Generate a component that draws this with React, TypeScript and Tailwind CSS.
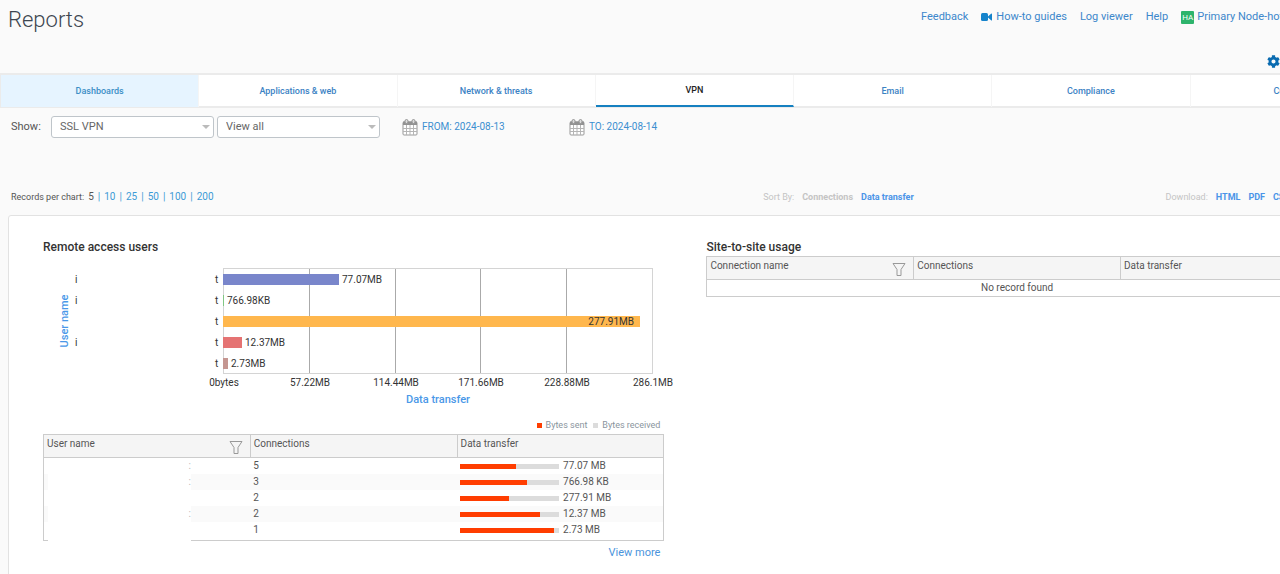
import { FaCog } from "react-icons/fa";

const TABS = ["Dashboards", "Applications & web", "Network & threats", "VPN", "Email", "Compliance", "Custom"];

const PAGE_SIZES = [10, 25, 50, 100, 200];

const BARS = [
  { width: 116, color: "#7986cb", label: "77.07MB", user: "i" },
  { width: 1, color: "#81c784", label: "766.98KB", user: "i" },
  { width: 417, color: "#ffb74d", label: "277.91MB", user: "", inside: true },
  { width: 19, color: "#e57373", label: "12.37MB", user: "i" },
  { width: 5, color: "#c59691", label: "2.73MB", user: "" },
];

const TICKS = ["0bytes", "57.22MB", "114.44MB", "171.66MB", "228.88MB", "286.1MB"];

const ROWS = [
  { connections: 5, sent: 56, total: "77.07 MB", mark: ":" },
  { connections: 3, sent: 68, total: "766.98 KB", mark: ":" },
  { connections: 2, sent: 49, total: "277.91 MB", mark: "" },
  { connections: 2, sent: 81, total: "12.37 MB", mark: ":" },
  { connections: 1, sent: 95, total: "2.73 MB", mark: "" },
];

function CalendarIcon() {
  return (
    <svg width="16" height="17" viewBox="0 0 16 17" className="shrink-0">
      <rect x="1" y="3" width="14" height="13" rx="1" fill="#fff" stroke="#999" />
      <path d="M1 2.5h14V6H1z" fill="#929292" />
      <path d="M4.5 6v10M8 6v10M11.5 6v10M1 9.5h14M1 12.5h14" stroke="#b5b5b5" />
      <rect x="3" y="0.5" width="3" height="4" rx="1.5" fill="#ddd" stroke="#929292" />
      <rect x="10" y="0.5" width="3" height="4" rx="1.5" fill="#ddd" stroke="#929292" />
    </svg>
  );
}

function VideoIcon() {
  return (
    <svg width="11" height="8" viewBox="0 0 11 8" fill="#1583cb">
      <rect width="7" height="8" rx="1.5" />
      <path d="M6.5 4L10 0.7Q11 0 11 1v6Q11 8 10 7.3z" />
    </svg>
  );
}

function FilterIcon() {
  return (
    <svg width="14" height="13" viewBox="0 0 14 13" fill="none" stroke="#999">
      <path d="M1 0.5h12L9 6.5v6H5v-6z" />
    </svg>
  );
}

function Select({ label, options }: { label: string; options: string[] }) {
  return (
    <div className="relative w-[163px]">
      <select
        aria-label={label}
        className="block h-[22px] w-full appearance-none rounded-[3px] border border-[#bfc5ca] bg-white pl-2 text-[11px] text-[#666]"
      >
        {options.map((o) => (
          <option key={o}>{o}</option>
        ))}
      </select>
      <svg width="8" height="4" className="pointer-events-none absolute right-1 top-[9px]">
        <path d="M0 0h8L4 4z" fill="#bbb" />
      </svg>
    </div>
  );
}

function TableHead({ first }: { first: string }) {
  const cell = "h-[23px] border border-[#ccc] px-[3px] pb-1 text-left font-normal";
  return (
    <thead className="bg-[#f5f5f5]">
      <tr>
        <th className={cell}>
          <div className="flex h-4 justify-between">
            {first}
            <button type="button" aria-label={"Filter by " + first} className="mr-1 mt-[5px]">
              <FilterIcon />
            </button>
          </div>
        </th>
        <th className={cell}>Connections</th>
        <th className={cell}>Data transfer</th>
      </tr>
    </thead>
  );
}

function UsageChart() {
  return (
    <svg viewBox="0 0 630 150" className="block w-[630px] text-[10px]" fill="#333" role="img" aria-label="Data transfer by user name">
      {/* plot area and grid */}
      <rect x="180.5" y="10.5" width="429" height="105" fill="none" stroke="#d4d4d4" />
      {[266.5, 352.5, 437.5, 523.5].map((x) => (
        <path key={x} d={`M${x} 11V115`} stroke="#aaa" />
      ))}

      {BARS.map((b, i) => (
        <g key={b.label} transform={`translate(0 ${i * 21})`}>
          <text x="32" y="25">{b.user}</text>
          <text x="172" y="25">t</text>
          <rect x="180" y="16" width={b.width} height="11" fill={b.color} />
          <text x={b.inside ? 591 : 183 + b.width} y="25" textAnchor={b.inside ? "end" : "start"}>
            {b.label}
          </text>
        </g>
      ))}

      {TICKS.map((t, i) => (
        <text key={t} x={181 + i * 86 - (i > 2 ? 1 : 0)} y="128" textAnchor="middle">{t}</text>
      ))}

      <g fill="#4a98e8" className="text-[11px] font-medium" textAnchor="middle">
        <text x="395" y="145">Data transfer</text>
        <text transform="translate(25 63) rotate(-90)">User name</text>
      </g>
    </svg>
  );
}

export default function App() {
  return (
    <div className="h-screen overflow-hidden bg-[#fafafa] font-['Roboto','Liberation_Sans',sans-serif] text-[11px] leading-4 text-[#555]">
      <header className="flex h-[73px] justify-between pl-2">
        <h1 className="pt-1 text-[22px] font-light leading-8 text-[#3d4650]">Reports</h1>
        <div className="flex w-[359px] flex-col justify-between overflow-hidden whitespace-nowrap pt-[9px] pb-[5px]">
          <nav className="flex gap-[13px] text-[#3c87cb]">
            <a href="#feedback">Feedback</a>
            <a href="#guides" className="flex items-center gap-1">
              <VideoIcon />
              How-to guides
            </a>
            <a href="#logs">Log viewer</a>
            <a href="#help">Help</a>
            <a href="#node" className="flex items-center gap-[3px]">
              <span className="w-[13px] rounded-[1px] bg-[#2eb46c] text-center text-[8px] leading-[13px] text-white">HA</span>
              Primary Node-hot
            </a>
          </nav>
          <button type="button" aria-label="Settings" className="self-end text-[#0a6bb0]">
            <FaCog className="size-[13px]" />
          </button>
        </div>
      </header>

      <div className="w-[108.5%]">
        <nav className="flex border-y-2 border-l border-[#ebebeb] bg-white text-[9px] font-medium">
          {TABS.map((tab) => (
            <a
              key={tab}
              href="#tab"
              className={
                "-mb-px flex h-8 flex-1 items-center justify-center border-r border-[#f5f5f5] " +
                (tab === "Dashboards"
                  ? "bg-[#e6f4ff] text-[#3d8fc6]"
                  : tab === "VPN"
                    ? "border-b-2 border-b-[#1580c0] text-[#222]"
                    : "text-[#3c82c4]")
              }
            >
              {tab}
            </a>
          ))}
        </nav>

        <div className="flex items-center pl-[11px] pt-2">
          <span className="w-10">Show:</span>
          <div className="flex gap-[3px]">
            <Select label="Report" options={["SSL VPN", "VPN"]} />
            <Select label="View" options={["View all"]} />
          </div>
          <button type="button" className="ml-[22px] flex w-[167px] items-center gap-1 text-[10px] text-[#3c8fd0]">
            <CalendarIcon />
            FROM: 2024-08-13
          </button>
          <button type="button" className="flex items-center gap-1 text-[10px] text-[#3c8fd0]">
            <CalendarIcon />
            TO: 2024-08-14
          </button>
        </div>

        <div className="grid grid-cols-[54.6%_29.2%_1fr] pl-[11px] pt-[51px] pb-[10px] text-[9px]">
          <div className="flex gap-1">
            Records per chart:
            <span className="text-[10px]">5</span>
            {PAGE_SIZES.map((n) => (
              <span key={n} className="flex gap-1 text-[10px] text-[#3c9bd6]">
                | <a href="#size">{n}</a>
              </span>
            ))}
          </div>
          <div className="flex gap-2 text-[#c4c4c4]">
            Sort By:
            <button type="button" className="font-bold">Connections</button>
            <button type="button" className="font-bold text-[#4a94e8]">Data transfer</button>
          </div>
          <div className="flex gap-2 text-[#c4c4c4]">
            Download:
            <a href="#html" className="font-bold text-[#4a94e8]">HTML</a>
            <a href="#pdf" className="font-bold text-[#4a94e8]">PDF</a>
            <a href="#csv" className="font-bold text-[#4a94e8]">CSV</a>
          </div>
        </div>

        <main className="ml-2 mr-[26px] grid grid-cols-2 gap-[42px] rounded-[3px] border border-[#e2e2e2] bg-white px-[34px] pt-[23px] pb-10 text-[10px]">
          <section className="min-w-0">
            <h2 className="text-[12px] font-medium text-[#333]">Remote access users</h2>
            <div className="pt-[3px]">
              <UsageChart />
            </div>
            <div className="flex items-center justify-end gap-1 pt-[9px] pr-1 text-[9px] text-[#8a959e]">
              <span className="size-[5px] bg-[#ff3d00]" />
              Bytes sent
              <span className="ml-[2px] size-[5px] bg-[#dcdcdc]" />
              Bytes received
            </div>
            <table className="mt-[1px] w-full table-fixed border-collapse border border-[#ccc]">
              <TableHead first="User name" />
              <tbody>
                {ROWS.map((r) => (
                  <tr key={r.total} className="h-4 even:bg-[#fafafa]">
                    <td>
                      <div className="ml-1 h-4 w-[143px] bg-white text-right text-[#bbb]">{r.mark}</div>
                    </td>
                    <td className="px-[3px]">{r.connections}</td>
                    <td className="px-[3px]">
                      <div className="flex items-center gap-1">
                        <div className="h-[5px] w-[99px] bg-[#dcdcdc]">
                          <div className="h-full bg-[#ff3d00]" style={{ width: r.sent + "%" }} />
                        </div>
                        {r.total}
                      </div>
                    </td>
                  </tr>
                ))}
                <tr>
                  <td colSpan={3}>
                    <div className="relative -mb-[2px] ml-1 h-1 w-[143px] bg-white" />
                  </td>
                </tr>
              </tbody>
            </table>
            <div className="pt-1 pr-1 text-right text-[11px]">
              <a href="#more" className="text-[#4a94dc]">View more</a>
            </div>
          </section>

          <section className="min-w-0">
            <h2 className="text-[12px] font-medium text-[#333]">Site-to-site usage</h2>
            <table className="mt-[1px] w-full table-fixed border-collapse border border-[#ccc]">
              <TableHead first="Connection name" />
              <tbody>
                <tr>
                  <td colSpan={3} className="text-center">No record found</td>
                </tr>
              </tbody>
            </table>
          </section>
        </main>
      </div>
    </div>
  );
}
